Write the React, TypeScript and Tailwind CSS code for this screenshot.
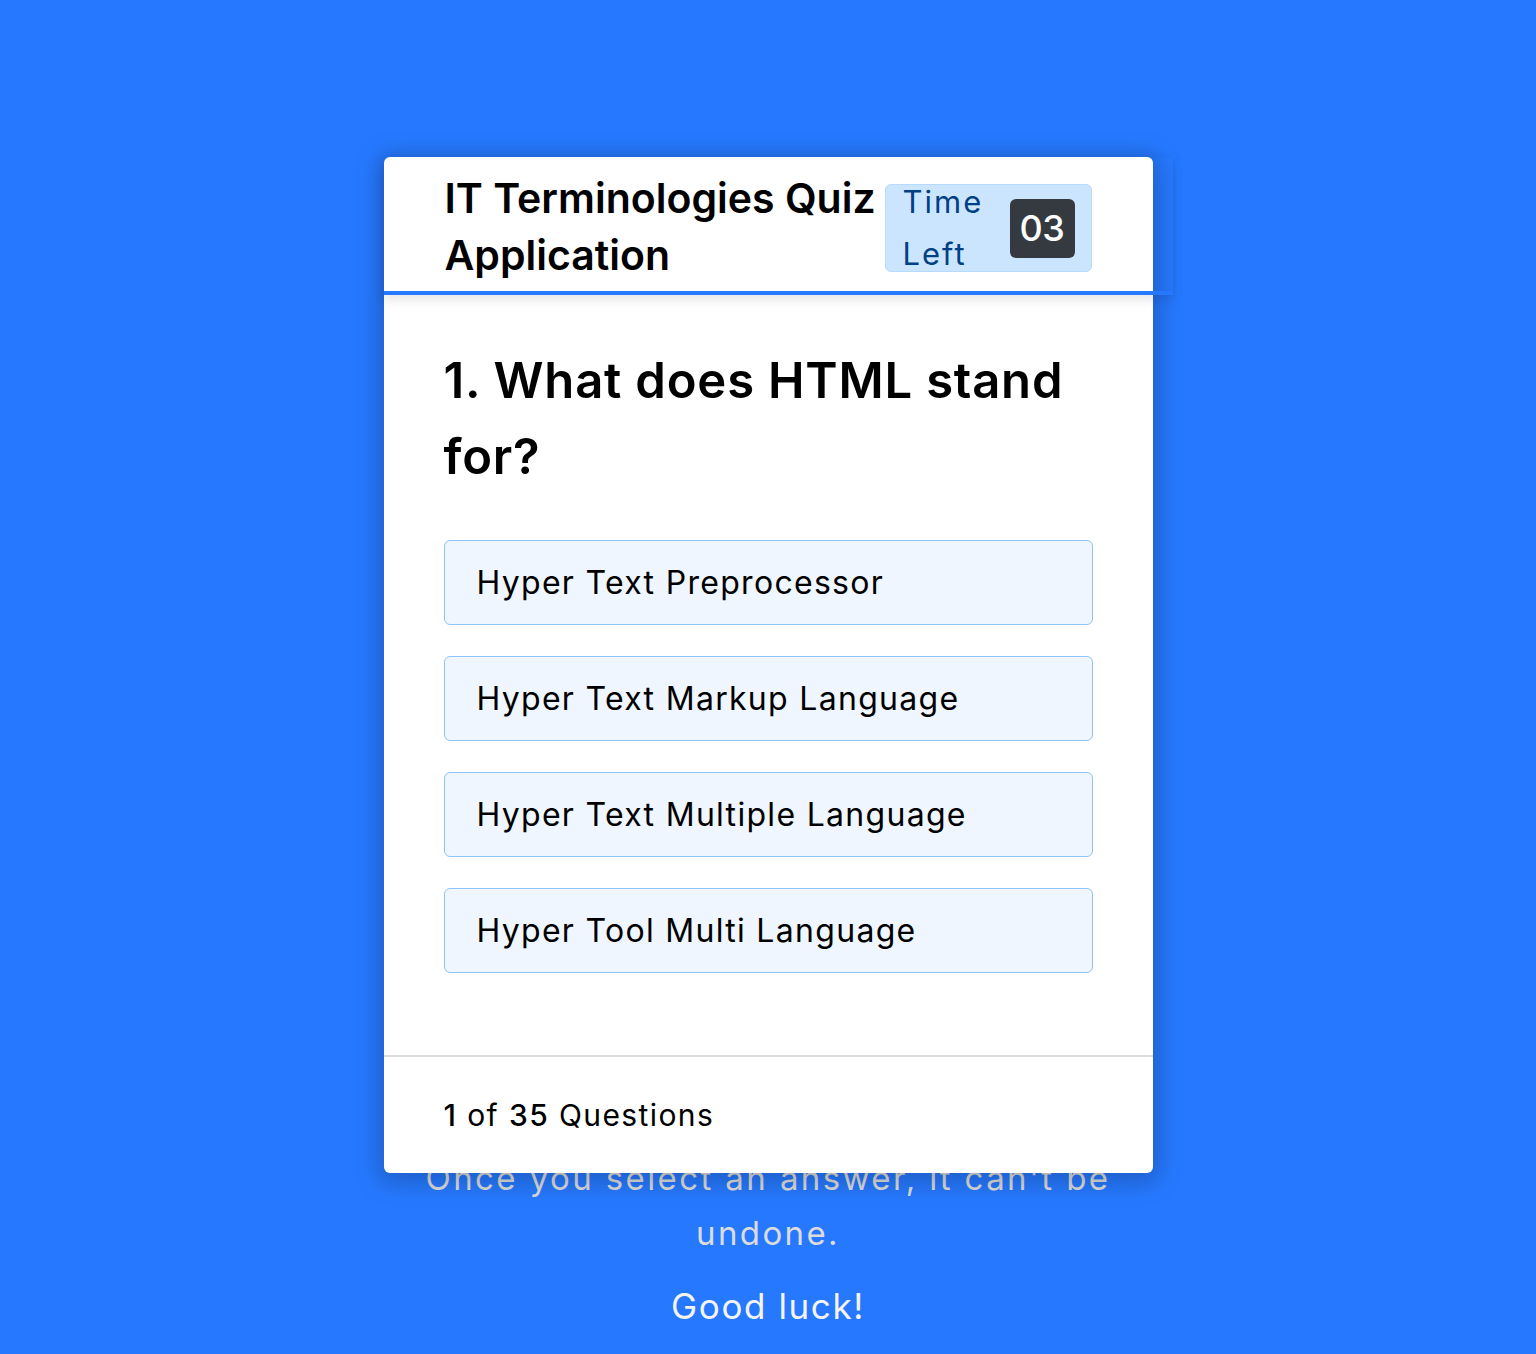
import React from "react";

const options = [
  "Hyper Text Preprocessor",
  "Hyper Text Markup Language",
  "Hyper Text Multiple Language",
  "Hyper Tool Multi Language",
];

export default function App() {
  return (
    <div className="min-h-[1354px] bg-[#2679ff] flex flex-col items-center pt-[157px] font-['Inter',sans-serif] overflow-hidden">
      <div className="relative z-10 w-[769px] bg-white rounded-[6px] shadow-[0_4px_24px_6px_rgba(0,0,0,0.22)]">
        <header className="w-[789px] h-[138px] flex items-center justify-between pl-[61px] pr-[81px] border-b-[4px] border-[#2679ff] shadow-[0_4px_10px_1px_rgba(0,0,0,0.1)]">
          <h1 className="text-[41px] leading-[57px] font-semibold text-black tracking-[0px] mt-[6px] whitespace-nowrap">
            IT Terminologies Quiz
            <br />
            Application
          </h1>
          <div className="w-[207px] h-[88px] flex items-center justify-between pl-[17px] pr-[16px] bg-[#cce5ff] border border-[#b8daff] rounded-[6px] mt-[8px]">
            <div className="text-[31px] leading-[52px] text-[#004085] tracking-[2px]">
              Time
              <br />
              Left
            </div>
            <div className="w-[65px] h-[59px] flex items-center justify-center bg-[#343a40] text-white text-[36px] font-medium rounded-[6px] tracking-[-0.5px]">
              03
            </div>
          </div>
        </header>
        <section className="px-[60px] pt-[48px] pb-[82px]">
          <h2 className="text-[49px] leading-[76px] font-semibold text-black tracking-[0.8px] mb-[45px]">
            1. What does HTML stand for?
          </h2>
          <div className="flex flex-col gap-[31px]">
            {options.map((o) => (
              <div
                key={o}
                className="h-[85px] flex items-center px-[32px] bg-[#eff6ff] border border-[#8fc4f7] rounded-[6px] text-[32px] text-black tracking-[1.3px]"
              >
                {o}
              </div>
            ))}
          </div>
        </section>
        <footer className="h-[118px] flex items-center px-[60px] border-t-2 border-[#dcdcdc] text-[30px] text-black tracking-[1.4px]">
          <span className="font-medium">1</span>&nbsp;of&nbsp;<span className="font-medium">35</span>&nbsp;Questions
        </footer>
      </div>
      <div className="relative z-0 -mt-[22px] w-[769px] text-center">
        <p className="text-[33px] leading-[55px] text-[#dcdcdc] tracking-[2.4px] whitespace-nowrap">
          Once you select an answer, it can't be
          <br />
          undone.
        </p>
        <p className="mt-[18px] text-[35px] leading-[55px] text-[#f4f4f4] tracking-[1.6px]">Good luck!</p>
      </div>
    </div>
  );
}
